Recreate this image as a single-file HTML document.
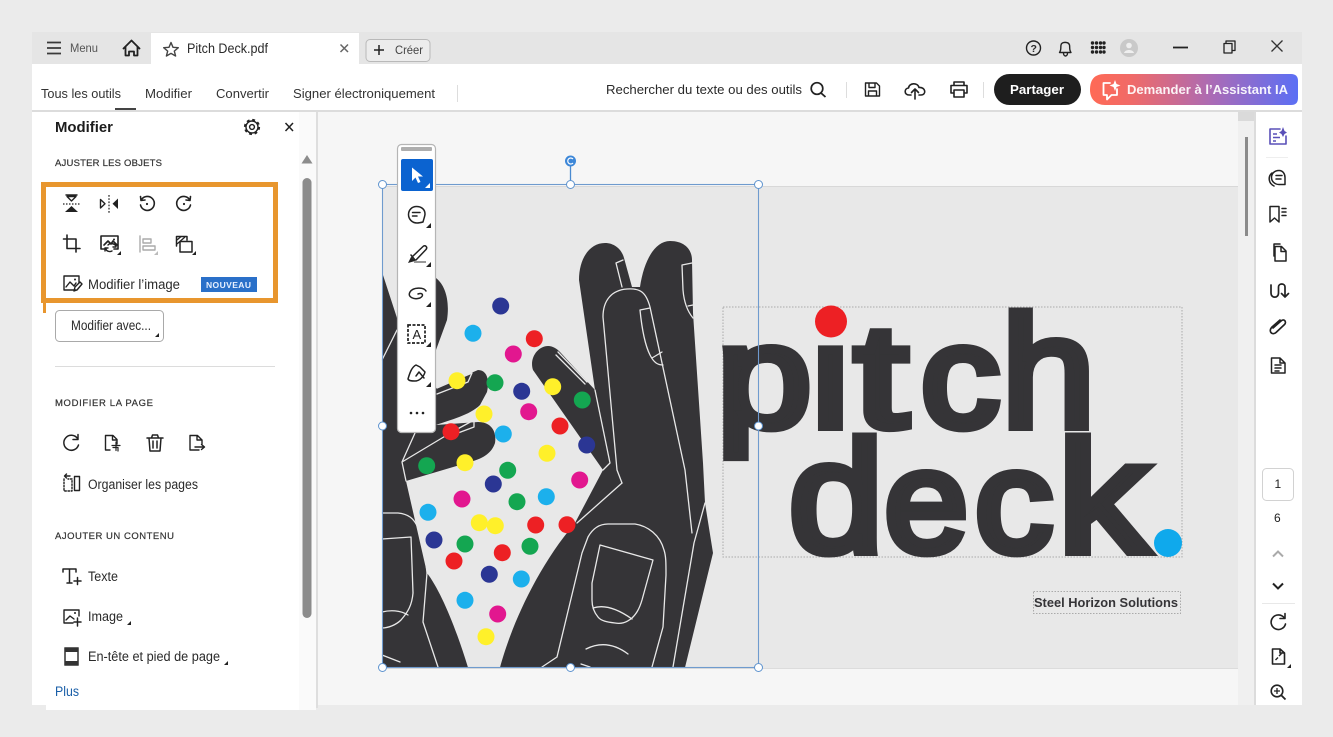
<!DOCTYPE html>
<html><head><meta charset="utf-8"><title>Pitch Deck.pdf</title>
<style>
html,body{margin:0;padding:0;background:#ebebeb;width:1333px;height:737px;overflow:hidden}
svg{display:block}
text{font-family:"Liberation Sans",sans-serif;fill:#2a2a2a}
.i{fill:none;stroke:#222;stroke-width:1.4;stroke-linecap:round;stroke-linejoin:round}
.w{fill:none;stroke:#e8e8e8;stroke-width:1.3;stroke-linejoin:round;stroke-linecap:round}
.L{font-family:"Liberation Sans",sans-serif;font-weight:normal;stroke:#353437;stroke-width:9;stroke-linejoin:miter}
.H{stroke:#333;stroke-width:.2}
</style></head><body>
<svg width="1333" height="737" viewBox="0 0 1333 737" xmlns="http://www.w3.org/2000/svg">
<defs><linearGradient id="ai" x1="0" x2="1" y1="0" y2="0"><stop offset="0" stop-color="#ff6a55"/><stop offset=".2" stop-color="#f06a68"/><stop offset=".6" stop-color="#a86bb8"/><stop offset="1" stop-color="#5b6ff5"/></linearGradient></defs>
<rect width="1333" height="737" fill="#ebebeb"/>
<!-- tab bar -->
<rect x="32" y="32" width="1270" height="32" fill="#e5e5e5"/>
<rect x="151" y="33" width="208" height="31" fill="#fff"/>
<g stroke="#3a3a3a" stroke-width="1.8"><path d="M47 42.5H61M47 48H61M47 53.5H61"/></g>
<text x="70" y="52" font-size="12" textLength="28" lengthAdjust="spacingAndGlyphs" style="fill:#555">Menu</text>
<path class="i" style="stroke-width:1.8" d="M123.5 48.5L131.5 40.5L139.5 48.5M125.5 47V55.5H129V51.5H134V55.5H137.5V47"/>
<path class="i" style="stroke:#444" d="M171 42.5L173 47.3L178.3 47.7L174.3 51.1L175.6 56L171 53.4L166.4 56L167.7 51.1L163.7 47.7L169 47.3Z"/>
<text x="187" y="53" font-size="13.5" textLength="81" lengthAdjust="spacingAndGlyphs">Pitch Deck.pdf</text>
<path d="M340.5 44.5L348 52M348 44.5L340.5 52" stroke="#666" stroke-width="1.5"/>
<rect x="366" y="39.5" width="64" height="22" rx="4" fill="#ececec" stroke="#b9b9b9"/>
<path d="M374 50H384M379 45V55" stroke="#222" stroke-width="1.5"/>
<text x="395" y="54" font-size="12" textLength="28" lengthAdjust="spacingAndGlyphs" style="fill:#444">Créer</text>
<!-- top right -->
<circle cx="1033.5" cy="48" r="7" class="i"/>
<text x="1030.5" y="52" font-size="10.5" font-weight="bold">?</text>
<path class="i" d="M1059.5 52.5C1061.5 50 1060.5 47 1061 45C1061.5 41.5 1068.5 41.5 1069.5 45C1070 47 1069 50 1071 52.5ZM1063.5 53C1063.5 57 1067.5 57 1067.5 53"/>
<g fill="#222"><circle cx="1092.5" cy="43" r="1.7"/><circle cx="1096.5" cy="43" r="1.7"/><circle cx="1100.5" cy="43" r="1.7"/><circle cx="1104" cy="43" r="1.7"/><circle cx="1092.5" cy="47.5" r="1.7"/><circle cx="1096.5" cy="47.5" r="1.7"/><circle cx="1100.5" cy="47.5" r="1.7"/><circle cx="1104" cy="47.5" r="1.7"/><circle cx="1092.5" cy="52" r="1.7"/><circle cx="1096.5" cy="52" r="1.7"/><circle cx="1100.5" cy="52" r="1.7"/><circle cx="1104" cy="52" r="1.7"/></g>
<circle cx="1129" cy="48" r="9" fill="#c9c9c9"/><circle cx="1129" cy="45.5" r="2.8" fill="#efefef"/><path d="M1124 53C1125 49 1133 49 1134 53Z" fill="#efefef"/>
<path d="M1173 47.5H1188" stroke="#222" stroke-width="1.8"/>
<path class="i" style="stroke-width:1.3" d="M1224 43.5H1232V53H1224ZM1226 43.5V41H1235V50.5H1232"/>
<path d="M1271.5 40.5L1282.5 51.5M1282.5 40.5L1271.5 51.5" stroke="#333" stroke-width="1.3"/>
<!-- toolbar -->
<rect x="32" y="64" width="1270" height="46" fill="#fff"/>
<rect x="32" y="110" width="1270" height="2" fill="#dcdcdc"/>
<text x="41" y="98" font-size="13" textLength="80" lengthAdjust="spacingAndGlyphs" style="fill:#333">Tous les outils</text>
<rect x="115" y="108" width="21" height="2" fill="#444"/>
<text x="145" y="98" font-size="13" textLength="47" lengthAdjust="spacingAndGlyphs" style="fill:#333">Modifier</text>
<text x="216" y="98" font-size="13" textLength="53" lengthAdjust="spacingAndGlyphs" style="fill:#333">Convertir</text>
<text x="293" y="98" font-size="13" textLength="142" lengthAdjust="spacingAndGlyphs" style="fill:#333">Signer électroniquement</text>
<rect x="457" y="85" width="1" height="17" fill="#ddd"/>
<text x="606" y="94" font-size="13" textLength="196" lengthAdjust="spacingAndGlyphs">Rechercher du texte ou des outils</text>
<circle cx="817" cy="88.5" r="5.8" class="i" style="stroke-width:1.7"/><path d="M821 93L825.5 97" stroke="#222" stroke-width="1.8"/>
<rect x="846" y="82" width="1" height="16" fill="#ddd"/>
<path class="i" d="M865.5 83H876.5L879.5 86V96H865.5ZM869 83V87.5H875V83M868.5 96V91H876.5V96"/>
<path class="i" style="stroke-width:1.6" d="M911 95H909C904 95 904 88.5 908.5 88C909 83 917.5 82 919 87.5C926 87 926.5 95 921 95H919M915 99V89.5M911.5 92.5L915 89L918.5 92.5"/>
<path class="i" style="stroke-width:1.6" d="M954 85.5V82H964V85.5M954 93H951V85.5H967V93H964M954 90H964V97H954Z"/>
<rect x="983" y="82" width="1" height="16" fill="#ddd"/>
<rect x="994" y="74" width="87" height="31" rx="15.5" fill="#1e1e1e"/>
<text x="1010" y="94" font-size="13" font-weight="bold" textLength="54" lengthAdjust="spacingAndGlyphs" style="fill:#fff">Partager</text>
<path d="M1105 74H1291Q1298 74 1298 81V98Q1298 105 1291 105H1105C1096 105 1090 99 1090 90C1090 80 1094 74 1105 74Z" fill="url(#ai)"/>
<path class="i" style="stroke:#fff;stroke-width:1.8" d="M1110 83H1103.5V95H1107V99.5L1111.5 95H1117V89"/>
<path d="M1115 80L1116.5 84L1120.5 85.5L1116.5 87L1115 91L1113.5 87L1109.5 85.5L1113.5 84Z" fill="#fff"/>
<text x="1127" y="94" font-size="13" font-weight="bold" textLength="161" lengthAdjust="spacingAndGlyphs" style="fill:#fff;fill-opacity:.92">Demander à l’Assistant IA</text>
<!-- left panel -->
<rect x="32" y="112" width="284" height="593" fill="#fff"/>
<rect x="46" y="705" width="270" height="5" fill="#fff"/>
<rect x="299" y="112" width="17" height="598" fill="#fafafa"/>
<rect x="316" y="112" width="2" height="596" fill="#dedede"/>
<text x="55" y="132" font-size="15" font-weight="bold" textLength="58" lengthAdjust="spacingAndGlyphs" style="fill:#1c1c1c">Modifier</text>
<g transform="translate(252 127)"><circle r="6" class="i"/><circle r="7" fill="none" stroke="#222" stroke-width="2.2" stroke-dasharray="2.8 2.7"/><circle r="2.4" class="i"/></g>
<path d="M285.5 123L293 131M293 123L285.5 131" stroke="#222" stroke-width="1.5"/>
<path d="M301.5 163.5L307 155L312.5 163.5Z" fill="#8c8c8c"/>
<rect x="302.5" y="178" width="9" height="440" rx="4.5" fill="#8c8c8c"/>
<text class="H" x="55" y="166" font-size="9.5" textLength="107" lengthAdjust="spacing" style="fill:#333">AJUSTER LES OBJETS</text>
<!-- orange box -->
<rect x="43.5" y="184.5" width="232" height="116" fill="none" stroke="#e8962e" stroke-width="5"/>
<rect x="43" y="303" width="3" height="10" fill="#e8962e"/>
<!-- icons row1 -->
<path class="i" d="M66 195H77M67 196.5H76L71.5 201Z"/><path d="M63 204H80" stroke="#222" stroke-width="1.2" stroke-dasharray="1.5 1.5"/><path d="M71.5 206L78 212H65Z" fill="#222"/>
<path class="i" d="M100.5 199.5V208L105 203.8Z"/><path d="M109 195V213" stroke="#222" stroke-width="1.2" stroke-dasharray="1.7 1.5"/><path d="M118 198.5V209L112.5 203.8Z" fill="#222"/>
<path class="i" style="stroke-width:1.6" d="M141.5 199.5A7 7 0 1 1 140.5 205M140.5 196.5L141 200.5L145 200"/><circle cx="147" cy="204" r="1.1" fill="#222"/>
<path class="i" style="stroke-width:1.6" d="M189.5 199.5A7 7 0 1 0 190.5 205M190.5 196.5L190 200.5L186 200"/><circle cx="184" cy="204" r="1.1" fill="#222"/>
<!-- icons row2 -->
<path class="i" style="stroke-width:1.6" d="M67 235V248.5H80M63.5 239H76V252"/>
<path class="i" style="stroke-width:1.6" d="M106 249H101V236H118V249H114M104 245L108 241L111 244L113 241L117 245"/><circle cx="114" cy="239.5" r="1" fill="#222"/><path class="i" d="M105 248C107 252 110 252 112 251M116 246C114 243 110 243 108 245M116 244V247H113M105 251V248H108"/>
<path d="M121 251V255H117Z" fill="#222"/>
<g class="i" style="stroke:#aaa"><path d="M140 236V252"/><rect x="143" y="239" width="8" height="4"/><rect x="143" y="246" width="12" height="4"/></g><path d="M158 251V255H154Z" fill="#bbb"/>
<path class="i" style="stroke-width:1.5" d="M176.5 246V236.5H187V240M180 241.5H192V252H180Z"/><path d="M177 240L181 236.5M177 244L185 237" stroke="#222" stroke-width="1.3"/>
<path d="M196 251V255H192Z" fill="#222"/>
<!-- edit image -->
<path class="i" d="M76 290H64V276H79V283M66 287L70 282L74 286L76 283"/><circle cx="75" cy="279.5" r="1" fill="#222"/><path class="i" d="M74 291L75 287L80 282L82 284L77 290Z"/>
<text x="88" y="289" font-size="13.5" textLength="92" lengthAdjust="spacingAndGlyphs">Modifier l’image</text>
<rect x="201" y="277" width="56" height="15" fill="#2a70c9"/>
<text x="206" y="288" font-size="8.5" font-weight="bold" textLength="45" lengthAdjust="spacing" style="fill:#e8f0ff">NOUVEAU</text>
<!-- modifier avec -->
<rect x="55.5" y="310.5" width="108" height="31" rx="4" fill="#fff" stroke="#a9a9a9"/>
<text x="71" y="330" font-size="13.5" textLength="80" lengthAdjust="spacingAndGlyphs">Modifier avec...</text>
<path d="M159 333V337H155Z" fill="#222"/>
<rect x="55" y="366" width="220" height="1" fill="#dcdcdc"/>
<text class="H" x="55" y="406" font-size="9.5" textLength="98" lengthAdjust="spacing" style="fill:#333">MODIFIER LA PAGE</text>
<!-- page icons -->
<path class="i" style="stroke-width:1.5" d="M77.5 438.5A7.5 7.5 0 1 0 78.5 445M78 434.5V439.5H73"/>
<path class="i" d="M110 450H105.5V435.5H113L117 439.5V444M112.5 435.5V440H117"/><path class="i" d="M112 445.5H120M116 442V450.5M113 447.5H118V451" style="stroke-width:1.2"/>
<path class="i" style="stroke-width:1.5" d="M147 438H163M151.5 438L152.5 435H157.5L158.5 438M149 438L150 451H160L161 438M153 441V448M157 441V448"/>
<path class="i" style="stroke-width:1.4" d="M199 450H190V435.5H197.5L202 440V444M197 435.5V440H202M195 447H204M201.5 444.5L204.5 447L201.5 449.5"/>
<!-- organise -->
<path class="i" style="stroke-dasharray:1.5 1.7" d="M64 479V491H72V479H68"/><path class="i" d="M70 476H65M66.5 474L64.5 476L66.5 478"/><rect x="74.5" y="476.5" width="5" height="14" class="i"/>
<text x="88" y="489" font-size="13.5" textLength="110" lengthAdjust="spacingAndGlyphs">Organiser les pages</text>
<text class="H" x="55" y="539" font-size="9.5" textLength="119" lengthAdjust="spacing" style="fill:#333">AJOUTER UN CONTENU</text>
<!-- T+ -->
<path class="i" style="stroke-width:1.5" d="M63 572V569H76V572M69.5 569V583M67 583H72M74 581H81M77.5 577.5V584.5"/>
<text x="88" y="581" font-size="13.5" textLength="30" lengthAdjust="spacingAndGlyphs">Texte</text>
<path class="i" d="M73 623H64V610H79V616M66 620L70 616L74 619"/><circle cx="75" cy="613" r="1" fill="#222"/><path class="i" style="stroke-width:1.5" d="M77.5 618V626M74 622H81"/>
<text x="88" y="621" font-size="13.5" textLength="35" lengthAdjust="spacingAndGlyphs">Image</text>
<path d="M131 621V625H127Z" fill="#222"/>
<rect x="65" y="648" width="13" height="17" fill="none" stroke="#222" stroke-width="1.4"/><rect x="65" y="648" width="13" height="4" fill="#333"/><rect x="65" y="661" width="13" height="4" fill="#333"/>
<text x="88" y="661" font-size="13.5" textLength="132" lengthAdjust="spacingAndGlyphs">En-tête et pied de page</text>
<path d="M228 661V665H224Z" fill="#222"/>
<text x="55" y="696" font-size="13.5" textLength="24" lengthAdjust="spacingAndGlyphs" style="fill:#1a5fa8">Plus</text>
<!-- content area -->
<rect x="318" y="112" width="920" height="593" fill="#f6f6f6"/>
<rect x="382" y="186" width="856" height="482" fill="#e8e8e8"/>
<rect x="382" y="186" width="856" height="1" fill="#d8d8d8"/>
<rect x="382" y="668" width="856" height="1" fill="#dcdcdc"/>
<!-- hand -->
<path fill="#353437" d="M579 280C579 258 590 243 605 243C615 243 622 250 624 258L632 287L640 287C644 260 655 241 670 241C685 241 692 250 692 260L693 313L703 463L705 503L713 553L685 667.5L500 667.5C510 630 535 570 575 523L603 470L533 370C529 358 538 346 548 346C553 346 557 349 560 352L595 390Z"/>
<path fill="#353437" d="M382 272L397 318L436 278C445 285 450 300 447 320L436 350L436 388L478 370C486 370 490 378 487 392L480 405C470 415 450 420 436 425L478 422C490 422 497 430 495 443C492 452 485 458 470 462L406 481L427 573C440 590 455 625 468 667.5L382 667.5Z"/>
<g class="w">
<path d="M623 260L616 263L622 287"/>
<path d="M622 483L617 470L603 317C603 300 612 290 627 289C640 288 646 292 650 307L685 470L692 533"/>
<path d="M622 483L577 523"/>
<path d="M595 390L610 463L603 470"/>
<path d="M705 503L694 543L673 667"/>
<path d="M640 310L650 308M640 310C642 330 645 345 650 355C654 363 658 365 663 365M652 358L662 352"/>
<path d="M692 263L682 265L683 290C684 302 688 312 693 318M688 306L693 305"/>
<path d="M556 355L585 384M558 352L587 382"/>
<path d="M542 667L557 657L582 553L588 537C593 528 600 524 608 524H635C648 526 660 535 664 550C666 556 666 563 666 575L663 627L652 667"/>
<path d="M600 545L653 560L642 600C639 610 636 614 632 618C626 623 621 624 615 623C607 622 601 621 598 617C593 611 592 605 592 600V583ZM593 608C602 605 615 607 632 619"/>
<path d="M586 649C598 643 612 642 628 654M581 664L590 667"/>
<path d="M382 513H398C408 514 414 518 418 528C423 540 425 553 427 573L423 622L438 667"/>
<path d="M382 539L411 537L413 593C412 605 408 612 401 620C396 625 388 628 382 628M382 612C390 610 400 610 408 615"/>
<path d="M382 655L400 662M382 360L397 330"/>
<path d="M415 433L402 462L406 481M402 462L452 432L474 420L474 427L458 433"/>
<path d="M437 388L472 373L468 382L437 394"/>
</g>
<!-- dots -->
<g fill="#2b3694"><circle cx="500.7" cy="306" r="8.5"/><circle cx="521.7" cy="391.3" r="8.5"/><circle cx="586.7" cy="445" r="8.5"/><circle cx="493.3" cy="484" r="8.5"/><circle cx="434" cy="540" r="8.5"/><circle cx="489.3" cy="574.3" r="8.5"/></g>
<g fill="#1cb0ec"><circle cx="473" cy="333.3" r="8.5"/><circle cx="503.3" cy="434" r="8.5"/><circle cx="546.3" cy="496.7" r="8.5"/><circle cx="428" cy="512.3" r="8.5"/><circle cx="521.3" cy="579" r="8.5"/><circle cx="465" cy="600.3" r="8.5"/></g>
<g fill="#ed2024"><circle cx="534.3" cy="338.7" r="8.5"/><circle cx="560" cy="426" r="8.5"/><circle cx="451" cy="431.7" r="8.5"/><circle cx="535.7" cy="525" r="8.5"/><circle cx="567" cy="524.7" r="8.5"/><circle cx="502.3" cy="552.7" r="8.5"/><circle cx="454" cy="561" r="8.5"/></g>
<g fill="#e2178f"><circle cx="513.3" cy="354" r="8.5"/><circle cx="528.7" cy="411.7" r="8.5"/><circle cx="579.7" cy="480" r="8.5"/><circle cx="462" cy="499" r="8.5"/><circle cx="497.7" cy="614" r="8.5"/></g>
<g fill="#fff02a"><circle cx="457" cy="380.7" r="8.5"/><circle cx="552.7" cy="386.7" r="8.5"/><circle cx="484" cy="414" r="8.5"/><circle cx="547" cy="453.3" r="8.5"/><circle cx="465" cy="462.7" r="8.5"/><circle cx="479.3" cy="522.7" r="8.5"/><circle cx="495.3" cy="525.7" r="8.5"/><circle cx="486" cy="636.7" r="8.5"/></g>
<g fill="#14a651"><circle cx="495" cy="382.7" r="8.5"/><circle cx="582.3" cy="400" r="8.5"/><circle cx="426.7" cy="465.7" r="8.5"/><circle cx="507.7" cy="470.3" r="8.5"/><circle cx="517" cy="501.7" r="8.5"/><circle cx="465" cy="544" r="8.5"/><circle cx="530" cy="546.3" r="8.5"/></g>
<!-- logo -->
<rect x="723" y="307" width="459" height="250" fill="none" stroke="#aaa" stroke-dasharray="1.5 1.5"/>
<text class="L" x="717.1" y="426.5" font-size="145" textLength="94.3" lengthAdjust="spacingAndGlyphs" style="fill:#353437">p</text>
<text class="L" x="812" y="426.5" font-size="145" textLength="37" lengthAdjust="spacingAndGlyphs" style="fill:#353437">i</text>
<text class="L" x="854.7" y="426.5" font-size="145" textLength="52.8" lengthAdjust="spacingAndGlyphs" style="fill:#353437">t</text>
<text class="L" x="921" y="426.5" font-size="145" textLength="78.6" lengthAdjust="spacingAndGlyphs" style="fill:#353437">c</text>
<text class="L" x="1001.7" y="426.5" font-size="158" textLength="93.4" lengthAdjust="spacingAndGlyphs" style="fill:#353437">h</text>
<text class="L" x="788.9" y="551.5" font-size="158" textLength="94.5" lengthAdjust="spacingAndGlyphs" style="fill:#353437">d</text>
<text class="L" x="884.6" y="551.5" font-size="145" textLength="83.4" lengthAdjust="spacingAndGlyphs" style="fill:#353437">e</text>
<text class="L" x="975.1" y="551.5" font-size="145" textLength="77.5" lengthAdjust="spacingAndGlyphs" style="fill:#353437">c</text>
<text class="L" x="1058.1" y="551.5" font-size="158" textLength="89.5" lengthAdjust="spacingAndGlyphs" style="fill:#353437">k</text>
<rect x="815" y="310" width="32" height="31" fill="#e8e8e8"/>
<circle cx="831" cy="321.5" r="16" fill="#ed2024"/>
<circle cx="1168" cy="543" r="14" fill="#0fa9ec"/>
<rect x="1033.5" y="591.5" width="147" height="22" fill="none" stroke="#aaa" stroke-dasharray="1.5 1.5"/>
<text x="1034" y="607" font-size="12.5" font-weight="bold" textLength="144" lengthAdjust="spacingAndGlyphs" style="fill:#353437">Steel Horizon Solutions</text>
<!-- selection -->
<rect x="382.5" y="184.5" width="376" height="483" fill="none" stroke="#6f9bce" stroke-width="1.1"/>
<path d="M570.5 166V184" stroke="#4a8ad0" stroke-width="1.3"/>
<g fill="#fff" stroke="#5f94cf" stroke-width="1"><circle cx="382.5" cy="184.5" r="4"/><circle cx="570.5" cy="184.5" r="4"/><circle cx="758.5" cy="184.5" r="4"/><circle cx="382.5" cy="426" r="4"/><circle cx="758.5" cy="426" r="4"/><circle cx="382.5" cy="667.5" r="4"/><circle cx="570.5" cy="667.5" r="4"/><circle cx="758.5" cy="667.5" r="4"/></g>
<circle cx="570.5" cy="161" r="5.5" fill="#3d87d8"/><path d="M573 159A3 3 0 1 0 573 163" fill="none" stroke="#fff" stroke-width="1.2"/>
<!-- floating toolbar -->
<rect x="397.5" y="144.5" width="38" height="288" rx="4" fill="#fff" stroke="#b5b5b5" stroke-width="1.2"/>
<rect x="401" y="147" width="31" height="4" rx="1" fill="#aeaeae"/>
<rect x="401" y="159" width="32" height="32" rx="2" fill="#0b63d0"/>
<path d="M412 167.5V181L415.5 177.5L418 183L420.5 182L418 176.5H423Z" fill="#fff"/>
<path d="M430 183V188H425Z" fill="#fff"/>
<path class="i" style="stroke-width:1.5" d="M423 222C424 218 425 216 425 214C425 209 421 206.5 416.5 206.5C412 206.5 408.5 210 408.5 214.5C408.5 219 412 223 417 223C419 223 421 222.5 423 222ZM412.5 212.5H420M412.5 216H417"/>
<path d="M431 223V228H426Z" fill="#222"/>
<path class="i" style="stroke-width:1.5" d="M412 257L423 246.5C425 244.5 428 247 426 249.5L416 260H412ZM411 255L415 260"/><path d="M408 263L411 257L415 261Z" fill="#222"/><path d="M414 262H426" stroke="#999" stroke-width="2"/>
<path d="M431 262V267H426Z" fill="#222"/>
<path class="i" style="stroke-width:1.5" d="M426 291C424 287 413 287 410 292C407 297 414 300 420 298C424 296 423 292 418 294"/>
<path d="M431 302V307H426Z" fill="#222"/>
<rect x="408" y="325" width="17" height="18" fill="none" stroke="#222" stroke-width="1.7" stroke-dasharray="3 1.5"/>
<text x="412.5" y="339" font-size="13" style="fill:#222">A</text>
<path d="M431 342V347H426Z" fill="#222"/>
<path class="i" style="stroke-width:1.5" d="M408 379C410 372 412 367 416 365L420 367L425 372C424 376 420 381 415 381C412 381 409 381 408 379ZM416 376L419 372M419 372L424 378"/>
<path d="M431 382V387H426Z" fill="#222"/>
<g fill="#222"><circle cx="411" cy="413" r="1.3"/><circle cx="417" cy="413" r="1.3"/><circle cx="423" cy="413" r="1.3"/></g>
<!-- right scrollbar + rail -->
<rect x="1238" y="112" width="16" height="593" fill="#f0f0f0"/>
<rect x="1238" y="112" width="17" height="9" fill="#dadada"/>
<rect x="1254" y="112" width="2" height="593" fill="#dcdcdc"/>
<rect x="1245" y="137" width="3" height="99" fill="#8b8b8b"/>
<rect x="1256" y="112" width="46" height="593" fill="#fff"/>
<path class="i" style="stroke:#5a50b8;stroke-width:1.6" d="M1280 129H1270V144H1286V136"/><path d="M1273 134H1277M1273 137.5H1280M1273 141H1276" stroke="#5a50b8" stroke-width="1.5"/><path d="M1283 127L1284.5 131L1287 132.5L1284.5 134L1283 137L1281.5 134L1279 132.5L1281.5 131Z" fill="#5a50b8"/>
<rect x="1266" y="157" width="22" height="1" fill="#eee"/>
<path class="i" style="stroke-width:1.5" d="M1279 170.5C1274 170.5 1271.5 174 1271.5 177.5C1271.5 181.5 1275 184.5 1279 184.5H1285V177.5C1285 174 1283 170.5 1279 170.5ZM1276 175.5H1282M1276 179H1281M1272 173C1268 176 1268 183 1274 186"/>
<path class="i" style="stroke-width:1.5" d="M1270 206.5H1279V222L1274.5 218L1270 222ZM1282 208.5H1286M1282 212H1286M1282 215.5H1286"/>
<path class="i" style="stroke-width:1.5" d="M1274 256V244H1280M1275 246.5H1281.5L1286 251V261H1275ZM1281 246.5V251.5H1286"/>
<path class="i" style="stroke-width:1.7" d="M1271 285V293C1271 298.5 1278.5 298.5 1278.5 293V287C1278.5 283 1285 283 1285 287V296M1281.5 293.5L1285 297L1288.5 293.5"/>
<path class="i" style="stroke-width:1.7" d="M1273 328L1281 321C1284 318 1287 322 1284.5 324.5L1276 332.5C1272 336 1268 331 1272 327L1280 320"/>
<path class="i" style="stroke-width:1.5" d="M1271.5 358H1280L1285 363V373H1271.5ZM1280 358V363H1285M1275 365H1281M1275 368H1281M1275 371H1279"/>
<rect x="1262.5" y="468.5" width="31" height="32" rx="4" fill="#fff" stroke="#d2d2d2"/>
<text x="1274.5" y="488" font-size="12" style="fill:#222">1</text>
<text x="1274" y="522" font-size="12" style="fill:#222">6</text>
<path d="M1273 556.5L1278 551.5L1283 556.5" fill="none" stroke="#aaa" stroke-width="2"/>
<path d="M1273 583.5L1278 588.5L1283 583.5" fill="none" stroke="#222" stroke-width="2"/>
<rect x="1262" y="603" width="33" height="1" fill="#e8e8e8"/>
<path class="i" style="stroke-width:1.6" d="M1284 617.5A7.3 7.3 0 1 0 1285.5 624M1285 613.5V618.5H1280"/>
<path class="i" style="stroke-width:1.6" d="M1272.5 649H1280L1284.5 653V664H1272.5ZM1280 649V653H1284.5"/><path d="M1275.5 660L1278 657.5M1279 656L1281.5 653.5" stroke="#222" stroke-width="1.4"/>
<path d="M1291 664V668H1287Z" fill="#222"/>
<circle cx="1277" cy="691" r="5.8" class="i" style="stroke-width:1.6"/><path d="M1281.5 695.5L1285.5 699.5" stroke="#222" stroke-width="1.8"/><path d="M1274 691H1280M1277 688V694" stroke="#222" stroke-width="1.3"/>
</svg>
</body></html>
